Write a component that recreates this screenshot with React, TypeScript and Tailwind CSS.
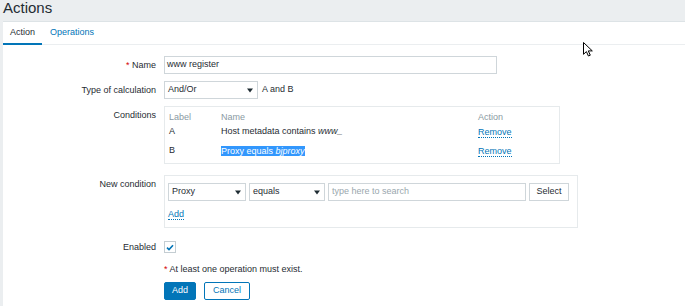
import React from "react";

function Caret() {
  return (
    <svg width="6" height="5" viewBox="0 0 6 5" className="shrink-0">
      <path d="M0 0.5h6L3 4.5z" fill="#1f2c33" />
    </svg>
  );
}

function Select({ value, width }: { value: string; width: string }) {
  return (
    <div className={`${width} flex h-[18px] shrink-0 items-center justify-between border border-[#cfd6da] bg-white pl-[3px] pr-[4px]`}>
      <span>{value}</span>
      <Caret />
    </div>
  );
}

function Label({ children, top }: { children: React.ReactNode; top?: boolean }) {
  return (
    <div className={`w-[153px] shrink-0 text-right leading-[11px] ${top ? "self-start pt-[4px]" : ""}`}>{children}</div>
  );
}

function DottedLink({ children }: { children: React.ReactNode }) {
  return (
    <span className="inline-block border-b border-dotted border-[#0275b8] leading-[10px] text-[#0275b8]">{children}</span>
  );
}

export default function App() {
  return (
    <div className="relative h-[306px] w-[685px] overflow-hidden bg-[#ebeef0] font-['Liberation_Sans',Arial,sans-serif] text-[9px] text-[#1f2c33]">
      <h1 className="h-[21px] pl-[3px] text-[15px] leading-[16px]">Actions</h1>

      <div className="ml-[3px] h-full border-t border-[#dde3e6] bg-white">
        {/* Tabs */}
        <div className="flex h-[23px] border-b border-[#ebeef0]">
          <div className="-mb-px flex h-[23px] items-center border-b-2 border-[#0275b8] px-[7px]">Action</div>
          <div className="flex items-center px-[8px] text-[#0275b8]">Operations</div>
        </div>

        {/* Form */}
        <div className="flex flex-col pt-[11px]">
          <div className="flex items-center gap-x-[8px]">
            <Label>
              <span className="text-[#d40000]">*</span> Name
            </Label>
            <div className="flex h-[18px] w-[333px] items-center border border-[#cfd6da] px-[2px]">www register</div>
          </div>

          <div className="mt-[7px] flex items-center gap-x-[8px]">
            <Label>Type of calculation</Label>
            <Select value="And/Or" width="w-[94px]" />
            <span className="-ml-[4px]">A and B</span>
          </div>

          <div className="mt-[7px] flex gap-x-[8px]">
            <Label top>Conditions</Label>
            <div className="w-[396px] border border-[#e6eaec] px-[4px] pb-[2px] pt-[4px]">
              <div className="grid grid-cols-[52px_257px_1fr] items-center">
                <div className="h-[12px] leading-[12px] text-[#8a9aa3]">Label</div>
                <div className="h-[12px] leading-[12px] text-[#8a9aa3]">Name</div>
                <div className="h-[12px] leading-[12px] text-[#8a9aa3]">Action</div>

                <div className="flex h-[18px] items-center">A</div>
                <div className="flex h-[18px] items-center">
                  Host metadata contains&nbsp;<i>www_</i>
                </div>
                <div className="flex h-[18px] items-center">
                  <DottedLink>Remove</DottedLink>
                </div>

                <div className="flex h-[20px] items-center">B</div>
                <div className="flex h-[20px] items-center">
                  <span className="bg-[#3297fd] leading-[10px] text-white">
                    Proxy equals <i>bjproxy</i>
                  </span>
                </div>
                <div className="flex h-[20px] items-center">
                  <DottedLink>Remove</DottedLink>
                </div>
              </div>
            </div>
          </div>

          <div className="mt-[11px] flex gap-x-[8px]">
            <Label top>New condition</Label>
            <div className="w-[414px] border border-[#e6eaec] px-[3px] pb-[8px] pt-[7px]">
              <div className="flex gap-x-[3px]">
                <Select value="Proxy" width="w-[78px]" />
                <Select value="equals" width="w-[76px]" />
                <div className="flex h-[18px] w-[198px] items-center border border-[#cfd6da] px-[3px] text-[#9aa7ae]">
                  type here to search
                </div>
                <div className="flex h-[18px] w-[40px] items-center justify-center border border-[#cfd6da] bg-white">Select</div>
              </div>
              <div className="mt-[7px] h-[11px]">
                <DottedLink>Add</DottedLink>
              </div>
            </div>
          </div>

          <div className="mt-[13px] flex items-center gap-x-[8px]">
            <Label>Enabled</Label>
            <div className="flex h-[12px] w-[12px] items-center justify-center border border-[#c4cdd2]">
              <svg width="8" height="7" viewBox="0 0 8 7">
                <path d="M1 3.6l2 2 4-4.4" fill="none" stroke="#0275b8" strokeWidth="1.6" />
              </svg>
            </div>
          </div>

          <div className="mt-[11px] flex h-[11px] items-center gap-x-[8px]">
            <div className="w-[153px] shrink-0" />
            <div>
              <span className="text-[#d40000]">*</span> At least one operation must exist.
            </div>
          </div>

          <div className="mt-[7px] flex items-center gap-x-[8px]">
            <div className="w-[153px] shrink-0" />
            <div className="flex gap-x-[8px]">
              <button className="flex h-[18px] w-[32px] items-center justify-center rounded-[2px] border border-[#0275b8] bg-[#0275b8] text-white">
                Add
              </button>
              <button className="flex h-[18px] w-[46px] items-center justify-center rounded-[2px] border border-[#0275b8] bg-white text-[#0275b8]">
                Cancel
              </button>
            </div>
          </div>
        </div>
      </div>

      {/* mouse pointer */}
      <svg className="absolute left-[583px] top-[42px]" width="11" height="15" viewBox="0 0 11 15">
        <path d="M0.5 0.5V12.3L3.4 9.6L5.4 14L7.3 13.2L5.3 8.9H9.3Z" fill="#fff" stroke="#000" strokeWidth="1" strokeLinejoin="round" />
      </svg>
    </div>
  );
}
